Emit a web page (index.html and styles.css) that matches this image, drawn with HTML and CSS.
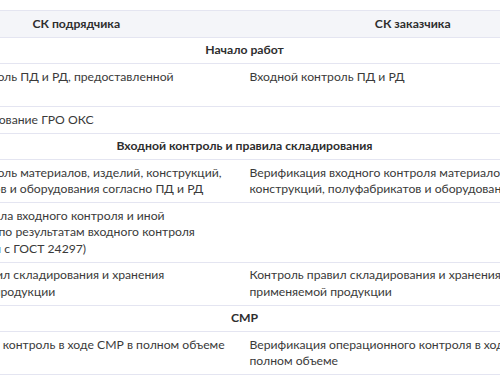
FILE: index.html
```html
<!DOCTYPE html>
<html lang="ru">
<head>
<meta charset="utf-8">
<link rel="stylesheet" href="styles.css">
</head>
<body>
<div class="viewport">
<table class="matrix">
  <thead>
    <tr><th class="col">СК подрядчика</th><th class="col">СК заказчика</th></tr>
  </thead>
  <tbody>
    <tr class="section"><td colspan="2">Начало работ</td></tr>
    <tr><td>Входной контроль ПД и РД, предоставленной заказчиком</td><td>Входной контроль ПД и РД</td></tr>
    <tr><td>Освидетельствование ГРО ОКС</td><td></td></tr>
    <tr class="section"><td colspan="2">Входной контроль и правила складирования</td></tr>
    <tr><td>Входной контроль материалов, изделий, конструкций, полуфабрикатов и оборудования согласно ПД и РД</td><td>Верификация входного контроля материалов, изделий, конструкций, полуфабрикатов и оборудования</td></tr>
    <tr><td>Ведение журнала входного контроля и иной документации по результатам входного контроля (в&nbsp;соответствии с ГОСТ 24297)</td><td></td></tr>
    <tr><td>Контроль правил складирования и хранения применяемой продукции</td><td>Контроль правил складирования и хранения применяемой продукции</td></tr>
    <tr class="section"><td colspan="2">СМР</td></tr>
    <tr><td>Операционный контроль в ходе СМР в полном объеме</td><td>Верификация операционного контроля в ходе СМР в полном объеме</td></tr>
  </tbody>
</table>
</div>
</body>
</html>
```

FILE: styles.css
```css
html, body {
  margin: 0;
  padding: 0;
  background: #ffffff;
}
.viewport {
  width: 500px;
  height: 380px;
  overflow: hidden;
  padding-top: 10px;
  box-sizing: border-box;
}
.matrix {
  margin-left: -92px;
  width: 673px;
  border-collapse: collapse;
  table-layout: fixed;
  font-family: Lato, "Open Sans", sans-serif;
  font-size: 12.2px;
  line-height: 16.5px;
  color: #3a3a3a;
}
.matrix th, .matrix td {
  padding: 4.5px 5px;
  border-bottom: 1px solid #e4e5f1;
  vertical-align: top;
  text-align: left;
}
.matrix thead th {
  background: #f4f5f9;
  border-top: 1px solid #e4e5f1;
  text-align: center;
  font-weight: 700;
  color: #2e2e2e;
}
.matrix .section td {
  text-align: center;
  font-weight: 700;
  color: #2e2e2e;
}
```
